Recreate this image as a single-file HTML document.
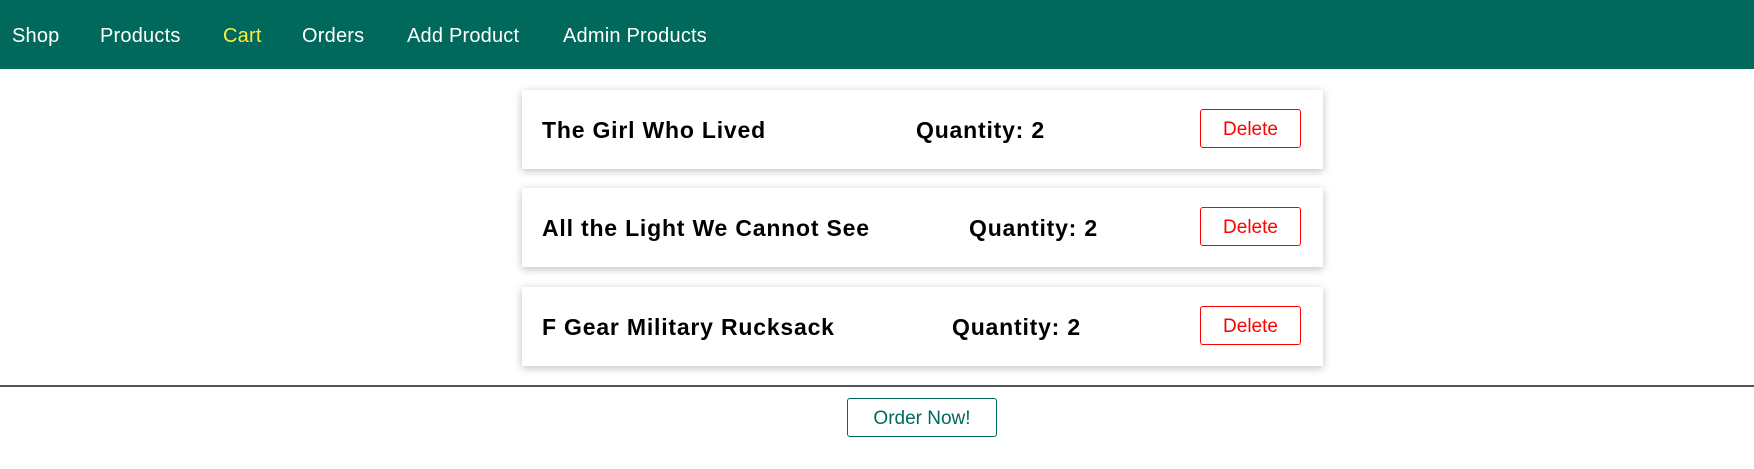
<!DOCTYPE html>
<html><head><style>
body{margin:0;width:1754px;height:469px;background:#fff;font-family:"Liberation Sans",sans-serif;position:relative;overflow:hidden}
.nav{position:absolute;left:0;top:0;width:1754px;height:69px;background:#00695c}
.nav span{position:absolute;top:25px;font-size:20px;color:#fff;letter-spacing:0.2px}
.card{position:absolute;left:522px;width:801px;height:79px;background:#fff;box-shadow:0 2px 8px rgba(0,0,0,.26)}
.card b{position:absolute;top:27px;font-size:23px;color:#000;letter-spacing:0.8px}
.del{position:absolute;left:678px;top:19px;width:99px;height:37px;border:1px solid red;border-radius:3px;color:red;font-size:19px;text-align:center;line-height:40px}
hr{position:absolute;margin:0;left:0;top:385px;width:1754px;border:0;border-top:2px solid #555}
.order{position:absolute;left:847px;top:398px;width:148px;height:37px;border:1px solid #00695c;border-radius:3px;color:#00695c;font-size:19px;text-align:center;line-height:40px}
</style></head><body>
<div class="nav">
<span style="left:12px">Shop</span>
<span style="left:100px">Products</span>
<span style="left:223px;color:#ffeb3b">Cart</span>
<span style="left:302px">Orders</span>
<span style="left:407px">Add Product</span>
<span style="left:563px">Admin Products</span>
</div>
<div class="card" style="top:90px"><b style="left:20px">The Girl Who Lived</b><b style="left:394px">Quantity: 2</b><div class="del">Delete</div></div>
<div class="card" style="top:188px"><b style="left:20px">All the Light We Cannot See</b><b style="left:447px">Quantity: 2</b><div class="del">Delete</div></div>
<div class="card" style="top:287px"><b style="left:20px">F Gear Military Rucksack</b><b style="left:430px">Quantity: 2</b><div class="del">Delete</div></div>
<hr>
<div class="order">Order Now!</div>
</body></html>
